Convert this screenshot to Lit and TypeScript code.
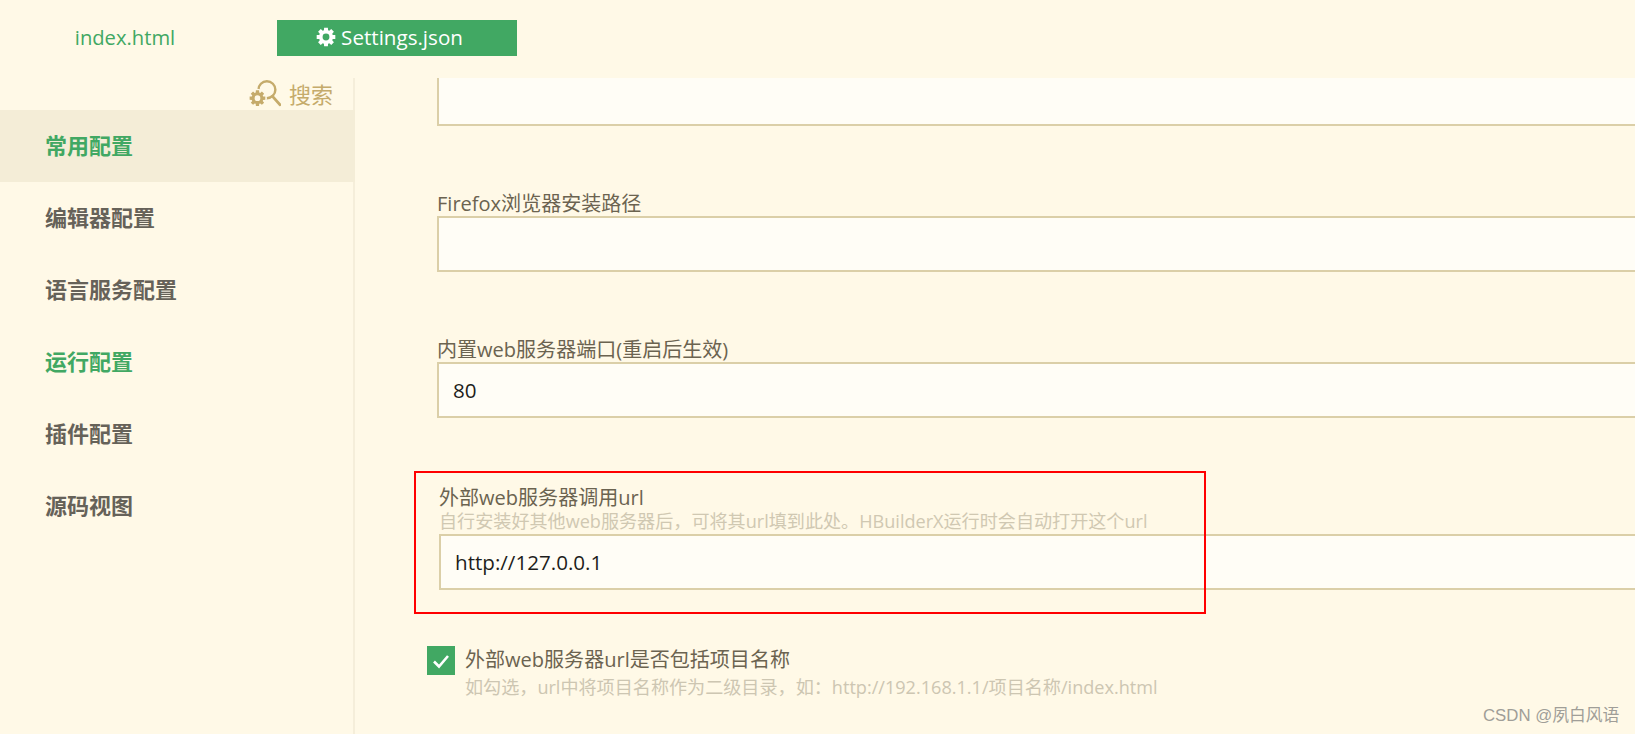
import { LitElement, html, css, svg } from "lit";
import { customElement } from "lit/decorators.js";

/* Eight-toothed cog with a round hole, computed around (cx, cy). */
const gear = (cx: number, cy: number, r: number, color: string) => {
  const pts: string[] = [];
  const root = r * 0.74;
  for (let i = 0; i < 8; i++) {
    const a = (i * Math.PI) / 4;
    const at = (rad: number, off: number) =>
      `${(cx + rad * Math.cos(a + off)).toFixed(2)} ${(cy + rad * Math.sin(a + off)).toFixed(2)}`;
    pts.push(at(root, -0.3), at(r, -0.2), at(r, 0.2), at(root, 0.3));
  }
  const h = r * 0.36;
  const d =
    `M${pts.join(" L")} Z ` +
    `M${cx - h} ${cy} A${h} ${h} 0 1 0 ${cx + h} ${cy} A${h} ${h} 0 1 0 ${cx - h} ${cy} Z`;
  return svg`<path d=${d} fill=${color} fill-rule="evenodd"></path>`;
};

const NAV = [
  { label: "常用配置", active: true, green: true },
  { label: "编辑器配置" },
  { label: "语言服务配置" },
  { label: "运行配置", green: true },
  { label: "插件配置" },
  { label: "源码视图" },
] as { label: string; active?: boolean; green?: boolean }[];

@customElement("app-root")
export class AppRoot extends LitElement {
  static styles = css`
    :host {
      display: block;
      width: 1635px;
      height: 734px;
      overflow: hidden;
      position: relative;
      background: #fff9e7;
      font-family: "Open Sans", "Noto Sans CJK SC", sans-serif;
      color: #6b6350;
    }
    .tabs {
      height: 78px;
      display: flex;
      padding-top: 20px;
      box-sizing: border-box;
      align-items: flex-start;
    }
    .tab {
      height: 36px;
      display: flex;
      align-items: center;
      justify-content: center;
      font-size: 20.2px;
      gap: 5px;
      padding-bottom: 2px;
      box-sizing: border-box;
    }
    .tab.plain {
      width: 250px;
      color: #41a863;
    }
    .tab.on {
      margin-left: 27px;
      width: 240px;
      background: #41a863;
      color: #fff;
      font-size: 20.6px;
      padding-right: 15px;
    }
    .tab svg { width: 20px; height: 20px; display: block; }
    .body {
      display: flex;
      height: 656px;
    }
    .side {
      width: 353px;
      border-right: 2px solid #f5eeda;
      flex: none;
      display: flex;
      flex-direction: column;
    }
    .search {
      height: 32px;
      display: flex;
      justify-content: flex-end;
      align-items: center;
      gap: 8px;
      padding: 0 20px 2px 0;
      box-sizing: border-box;
      color: #c5ab6b;
      font-size: 22px;
    }
    .search svg { width: 32px; height: 27px; display: block; }
    .item {
      height: 72px;
      display: flex;
      align-items: center;
      padding: 0 0 4px 45px;
      box-sizing: border-box;
      font-size: 22px;
      font-weight: 700;
      color: #666259;
    }
    .item.green { color: #41a863; }
    .item.active { background: #f4edd7; margin-right: -2px; }
    .main {
      flex: 1;
      min-width: 0;
      overflow: hidden;
      padding-left: 82px;
    }
    .stub {
      height: 48px;
      width: 1400px;
      box-sizing: border-box;
      border: 2px solid #dbcfa8;
      border-top: none;
      background: #fffdf6;
    }
    .field { margin-top: 66px; }
    .label {
      height: 24px;
      line-height: 24px;
      font-size: 20.05px;
      white-space: nowrap;
    }
    .input {
      height: 56px;
      width: 1400px;
      box-sizing: border-box;
      border: 2px solid #dbcfa8;
      background: #fffdf6;
      display: flex;
      align-items: center;
      padding-left: 14px;
      font-size: 20.6px;
      color: #1d1d1b;
    }
    .outer {
      position: relative;
      margin-top: 68px;
      margin-left: 2px;
    }
    .hint {
      height: 25px;
      line-height: 25px;
      font-size: 18.1px;
      color: #d0c8b2;
      white-space: nowrap;
    }
    .outer .hint { margin-top: -1px; }
    .red {
      position: absolute;
      left: -25px;
      top: -15px;
      width: 792px;
      height: 143px;
      box-sizing: border-box;
      border: 2px solid #ff0000;
      pointer-events: none;
    }
    .check {
      margin-top: 56px;
      margin-left: -10px;
      display: flex;
      gap: 10px;
      align-items: flex-start;
    }
    .box {
      width: 28px;
      height: 29px;
      background: #41a863;
      flex: none;
      display: flex;
      align-items: center;
      justify-content: center;
    }
    .box svg { width: 20px; height: 20px; display: block; }
    .check .label { margin-top: 2px; }
    .check .hint { margin-top: 3px; color: #cdc6b2; }
    .mark {
      position: absolute;
      left: 1483px;
      top: 704px;
      font-family: "Liberation Sans", "Noto Sans CJK SC", sans-serif;
      font-size: 16.8px;
      line-height: 24px;
      color: #a09e98;
      white-space: nowrap;
    }
  `;

  render() {
    return html`
      <div class="tabs">
        <div class="tab plain">index.html</div>
        <div class="tab on">
          <svg viewBox="0 0 20 20">${gear(10, 10, 9.5, "#fff")}</svg>
          <span>Settings.json</span>
        </div>
      </div>
      <div class="body">
        <nav class="side">
          <div class="search">
            <svg viewBox="0 0 34 28">
              <circle cx="19" cy="10" r="9" fill="none" stroke="#c5ab6b" stroke-width="2.6"></circle>
              <path d="M25 17 L33 26" stroke="#c5ab6b" stroke-width="3" stroke-linecap="round"></path>
              <circle cx="9" cy="19" r="10" fill="#fff9e7"></circle>
              ${gear(9, 19, 8.5, "#c5ab6b")}
            </svg>
            <span>搜索</span>
          </div>
          ${NAV.map(
            (n) => html`<div class="item ${n.active ? "active" : ""} ${n.green ? "green" : ""}">${n.label}</div>`
          )}
        </nav>
        <main class="main">
          <div class="stub"></div>
          <section class="field">
            <div class="label">Firefox浏览器安装路径</div>
            <div class="input"></div>
          </section>
          <section class="field">
            <div class="label">内置web服务器端口(重启后生效)</div>
            <div class="input">80</div>
          </section>
          <section class="outer">
            <div class="label">外部web服务器调用url</div>
            <div class="hint">自行安装好其他web服务器后，可将其url填到此处。HBuilderX运行时会自动打开这个url</div>
            <div class="input">http://127.0.0.1</div>
            <div class="red"></div>
          </section>
          <section class="check">
            <div class="box">
              <svg viewBox="0 0 20 20">
                <path d="M3 10.5 L8 15.5 L17 5" fill="none" stroke="#fff" stroke-width="2.6"></path>
              </svg>
            </div>
            <div>
              <div class="label">外部web服务器url是否包括项目名称</div>
              <div class="hint">如勾选，url中将项目名称作为二级目录，如：http://192.168.1.1/项目名称/index.html</div>
            </div>
          </section>
        </main>
      </div>
      <div class="mark">CSDN @夙白风语</div>
    `;
  }
}
